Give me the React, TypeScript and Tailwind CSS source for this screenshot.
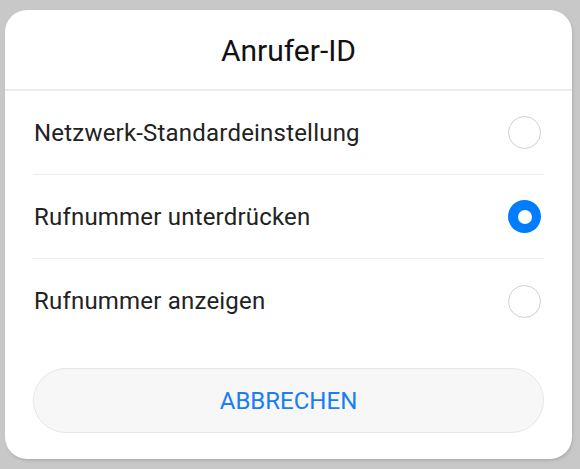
const options = [
  { label: "Netzwerk-Standardeinstellung", checked: false },
  { label: "Rufnummer unterdrücken", checked: true },
  { label: "Rufnummer anzeigen", checked: false },
];

function Radio({ checked }: { checked: boolean }) {
  if (checked) {
    return (
      <span className="flex h-[33px] w-[33px] items-center justify-center rounded-full bg-[#007dff]">
        <span className="block h-[14px] w-[14px] rounded-full bg-white" />
      </span>
    );
  }
  return <span className="block h-[33px] w-[33px] rounded-full border-[1.5px] border-[#cfcfcf] bg-white" />;
}

export default function App() {
  return (
    <div
      className="h-[469px] w-[580px] bg-[#c8c8c8] pt-[10px] pl-[5px]"
      style={{ fontFamily: "Roboto, 'Noto Sans', sans-serif" }}
    >
      <div className="flex h-[449px] w-[567px] flex-col rounded-[22px] bg-white shadow-[1px_2px_3px_rgba(0,0,0,0.12)]">
        <div className="flex h-[79px] items-center justify-center pt-[1px] text-[30px] text-[#111]">
          Anrufer-ID
        </div>
        <div className="h-[2px] bg-[#ececec]" />
        <div className="px-[28px]">
          {options.map((o, i) => (
            <div
              key={o.label}
              className={
                "flex h-[84px] items-center justify-between " +
                (i < options.length - 1 ? "border-b border-[#ececec]" : "")
              }
            >
              <span className="pl-[1px] text-[24px] tracking-[0.2px] text-[#222]">{o.label}</span>
              <span className="pr-[3px]">
                <Radio checked={o.checked} />
              </span>
            </div>
          ))}
        </div>
        <div className="px-[28px] pt-[25px]">
          <button className="flex h-[65px] w-full items-center justify-center rounded-full border border-[#e6e6e6] bg-[#f7f7f7] text-[24px] text-[#1a7df2]">
            ABBRECHEN
          </button>
        </div>
      </div>
    </div>
  );
}
